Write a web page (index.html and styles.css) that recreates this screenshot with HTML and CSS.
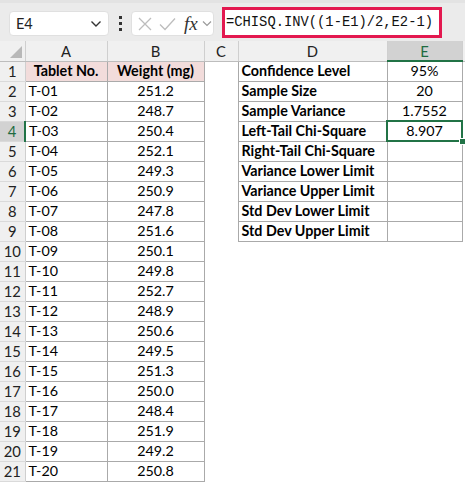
FILE: index.html
```html
<!DOCTYPE html>
<html>
<head>
<meta charset="utf-8">
<link rel="stylesheet" href="styles.css">
</head>
<body>
<div class="toolbar">
  <div class="namebox">
    <span class="ref">E4</span>
    <svg class="chev" width="12" height="8" viewBox="0 0 12 8"><path d="M1.5 1.5 L6 6 L10.5 1.5" fill="none" stroke="#333" stroke-width="1.4"/></svg>
  </div>
  <div class="dots"><i></i><i></i><i></i></div>
  <div class="fxbox">
    <svg width="14" height="14" viewBox="0 0 14 14"><path d="M1 1 L13 13 M13 1 L1 13" stroke="#bdbdbd" stroke-width="1.3" fill="none"/></svg>
    <svg width="17" height="14" viewBox="0 0 17 14"><path d="M1 7.5 L6 12.5 L16 1.5" stroke="#bdbdbd" stroke-width="1.3" fill="none"/></svg>
    <span class="fx">fx</span>
    <svg class="chev2" width="10" height="7" viewBox="0 0 10 7"><path d="M1 1.5 L5 5.5 L9 1.5" fill="none" stroke="#9a9a9a" stroke-width="1.2"/></svg>
  </div>
  <div class="formula"><span>=CHISQ.INV((1-E1)/2,E2-1)</span></div>
</div>
<table class="sheet">
  <colgroup><col class="c0"><col class="ca"><col class="cb"><col class="cc"><col class="cd"><col class="ce"><col class="cf"></colgroup>
  <tr class="hdr"><th class="corner"><span class="tri"></span></th><th>A</th><th>B</th><th>C</th><th>D</th><th class="selh">E</th><th class="last"></th></tr>
  <tr><th>1</th><td class="b hd c">Tablet No.</td><td class="b hd c">Weight (mg)</td><td></td><td class="b bold">Confidence Level</td><td class="b c">95%</td><td></td></tr>
  <tr><th>2</th><td class="b">T-01</td><td class="b c">251.2</td><td></td><td class="b bold">Sample Size</td><td class="b c">20</td><td></td></tr>
  <tr><th>3</th><td class="b">T-02</td><td class="b c">248.7</td><td></td><td class="b bold">Sample Variance</td><td class="b c">1.7552</td><td></td></tr>
  <tr><th class="selr">4</th><td class="b">T-03</td><td class="b c">250.4</td><td></td><td class="b bold">Left-Tail Chi-Square</td><td class="b c sel">8.907<span class="handle"></span></td><td></td></tr>
  <tr><th>5</th><td class="b">T-04</td><td class="b c">252.1</td><td></td><td class="b bold">Right-Tail Chi-Square</td><td class="b c"></td><td></td></tr>
  <tr><th>6</th><td class="b">T-05</td><td class="b c">249.3</td><td></td><td class="b bold">Variance Lower Limit</td><td class="b c"></td><td></td></tr>
  <tr><th>7</th><td class="b">T-06</td><td class="b c">250.9</td><td></td><td class="b bold">Variance Upper Limit</td><td class="b c"></td><td></td></tr>
  <tr><th>8</th><td class="b">T-07</td><td class="b c">247.8</td><td></td><td class="b bold">Std Dev Lower Limit</td><td class="b c"></td><td></td></tr>
  <tr><th>9</th><td class="b">T-08</td><td class="b c">251.6</td><td></td><td class="b bold">Std Dev Upper Limit</td><td class="b c"></td><td></td></tr>
  <tr><th>10</th><td class="b">T-09</td><td class="b c">250.1</td><td></td><td></td><td></td><td></td></tr>
  <tr><th>11</th><td class="b">T-10</td><td class="b c">249.8</td><td></td><td></td><td></td><td></td></tr>
  <tr><th>12</th><td class="b">T-11</td><td class="b c">252.7</td><td></td><td></td><td></td><td></td></tr>
  <tr><th>13</th><td class="b">T-12</td><td class="b c">248.9</td><td></td><td></td><td></td><td></td></tr>
  <tr><th>14</th><td class="b">T-13</td><td class="b c">250.6</td><td></td><td></td><td></td><td></td></tr>
  <tr><th>15</th><td class="b">T-14</td><td class="b c">249.5</td><td></td><td></td><td></td><td></td></tr>
  <tr><th>16</th><td class="b">T-15</td><td class="b c">251.3</td><td></td><td></td><td></td><td></td></tr>
  <tr><th>17</th><td class="b">T-16</td><td class="b c">250.0</td><td></td><td></td><td></td><td></td></tr>
  <tr><th>18</th><td class="b">T-17</td><td class="b c">248.4</td><td></td><td></td><td></td><td></td></tr>
  <tr><th>19</th><td class="b">T-18</td><td class="b c">251.9</td><td></td><td></td><td></td><td></td></tr>
  <tr><th>20</th><td class="b">T-19</td><td class="b c">249.2</td><td></td><td></td><td></td><td></td></tr>
  <tr><th>21</th><td class="b">T-20</td><td class="b c">250.8</td><td></td><td></td><td></td><td></td></tr>
  <tr class="tail"><th></th><td></td><td></td><td></td><td></td><td></td><td></td></tr>
</table>
</body>
</html>
```
FILE: styles.css
```css
html, body {
  margin: 0;
  padding: 0;
  background: #ffffff;
  overflow: hidden;
}
body {
  width: 465px;
  height: 482px;
  font-family: Lato, "Liberation Sans", sans-serif;
  color: #000;
}
.toolbar {
  height: 41px;
  background: #ebebeb;
  border-top: 3px solid #e3e3e3;
  box-sizing: border-box;
  display: flex;
  align-items: center;
  padding-left: 9px;
}
.namebox {
  width: 100px;
  height: 25px;
  box-sizing: border-box;
  background: #fff;
  border: 1px solid #e0e0e0;
  border-radius: 4px;
  display: flex;
  align-items: center;
  justify-content: space-between;
  padding: 0 6px 0 6px;
  margin-top: 3px;
  font-size: 14.5px;
  color: #222;
}
.dots {
  width: 22px;
  display: flex;
  flex-direction: column;
  align-items: center;
  gap: 3px;
  margin-top: 3px;
}
.dots i {
  display: block;
  width: 3px;
  height: 3px;
  background: #333;
}
.fxbox {
  width: 83px;
  height: 25px;
  box-sizing: border-box;
  background: #fff;
  border: 1px solid #e0e0e0;
  border-radius: 4px;
  margin-top: 3px;
  display: flex;
  align-items: center;
  gap: 7px;
  padding-left: 6px;
}
.fx {
  font-family: "Liberation Serif", serif;
  font-style: italic;
  font-size: 19px;
  color: #333;
  margin-left: 1px;
  line-height: 1;
}
.chev2 { margin-left: -3px; }
.formula {
  margin-left: 8px;
  width: 220px;
  height: 31px;
  margin-top: 1px;
  box-sizing: border-box;
  border: 3px solid #e3184f;
  background: #fff;
  display: flex;
  align-items: center;
  padding-left: 1px;
  font-family: "Liberation Mono", monospace;
  font-size: 13.8px;
  color: #111;
  white-space: nowrap;
}
.sheet {
  border-collapse: collapse;
  table-layout: fixed;
  width: 465px;
  font-size: 14.3px;
}
.c0 { width: 25px; }
.ca { width: 82px; }
.cb { width: 97px; }
.cc { width: 34px; }
.cd { width: 149px; }
.ce { width: 75px; }
.cf { width: 3px; }
.sheet tr { height: 20px; }
.sheet tr.hdr { height: 20px; }
.sheet th {
  background: #f0f0f0;
  font-weight: normal;
  color: #222;
  text-align: center;
  padding: 0;
  border-right: 1px solid #cfcfcf;
  border-bottom: 1px solid #dadada;
  font-size: 14.8px;
  line-height: 18px;
}
.hdr th {
  border-bottom: 1px solid #bdbdbd;
}
.hdr th.last { border-right: none; }
.sheet td {
  padding: 0 0 0 3px;
  white-space: nowrap;
  overflow: visible;
  line-height: 18px;
}
.sheet td.b {
  border: 1px solid #aaaaaa;
}
.sheet td.c {
  text-align: center;
  padding-left: 0;
}
.hd {
  background: #f2dcdb;
  font-weight: bold;
}
.bold { font-weight: bold; }
.corner { position: relative; }
.tri {
  position: absolute;
  right: 3px;
  bottom: 3px;
  width: 0;
  height: 0;
  border-left: 12px solid transparent;
  border-bottom: 12px solid #b8b8b8;
}
.sheet th.selh {
  background: #d2d2d2;
  color: #1e6b40;
  border-bottom: 2px solid #217346;
}
.sheet th.selr {
  background: #d2d2d2;
  color: #1e6b40;
  border-right: 2px solid #217346;
}
.sel {
  position: relative;
  outline: 2px solid #217346;
  outline-offset: -1px;
}
.handle {
  position: absolute;
  right: -4px;
  bottom: -4px;
  width: 5px;
  height: 5px;
  background: #217346;
  border: 1px solid #fff;
}
```
